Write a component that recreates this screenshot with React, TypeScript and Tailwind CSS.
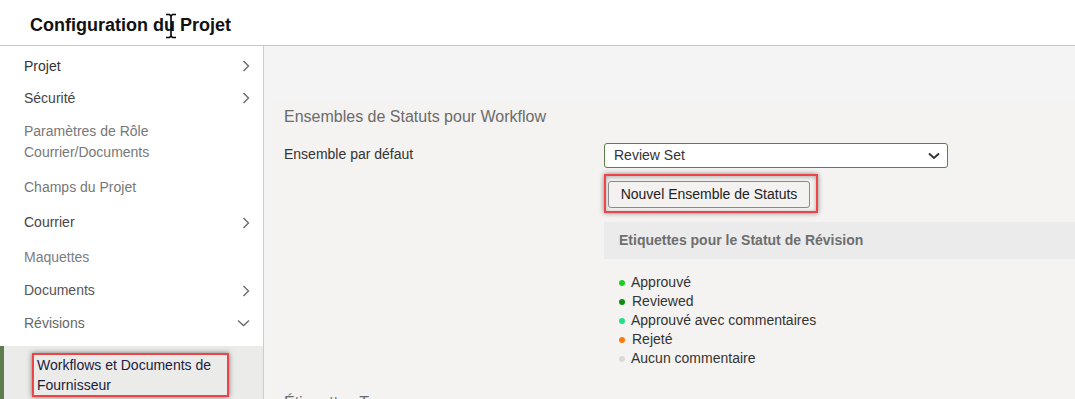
import React from 'react';

type NavItem = {
  label: string[];
  color: string;
  h: string;
  icon?: 'right' | 'down';
};

const NAV: NavItem[] = [
  { label: ['Projet'], color: 'text-[#333333]', h: 'h-[32px]', icon: 'right' },
  { label: ['Sécurité'], color: 'text-[#444444]', h: 'h-[32px]', icon: 'right' },
  { label: ['Paramètres de Rôle', 'Courrier/Documents'], color: 'text-[#777777]', h: 'h-[55px]' },
  { label: ['Champs du Projet'], color: 'text-[#777777]', h: 'h-[36px]' },
  { label: ['Courrier'], color: 'text-[#444444]', h: 'h-[35px]', icon: 'right' },
  { label: ['Maquettes'], color: 'text-[#7c7c84]', h: 'h-[34px]' },
  { label: ['Documents'], color: 'text-[#555555]', h: 'h-[33px]', icon: 'right' },
  { label: ['Révisions'], color: 'text-[#666666]', h: 'h-[32px]', icon: 'down' },
];

const LABELS = [
  { name: 'Approuvé', dot: 'bg-[#1ed01e]' },
  { name: 'Reviewed', dot: 'bg-[#128a12]', nudge: true },
  { name: 'Approuvé avec commentaires', dot: 'bg-[#22e08a]' },
  { name: 'Rejeté', dot: 'bg-[#ff7a0a]', nudge: true },
  { name: 'Aucun commentaire', dot: 'bg-[#dadada]' },
];

function ChevronRight() {
  return (
    <svg width="8" height="12" viewBox="0 0 8 12" fill="none" className="text-[#666]">
      <polyline points="1.5,1 6.5,6 1.5,11" stroke="currentColor" strokeWidth="1.3" />
    </svg>
  );
}

function ChevronDown() {
  return (
    <svg width="13" height="8" viewBox="0 0 13 8" fill="none" className="text-[#666]">
      <polyline points="1,1.5 6.5,6.5 12,1.5" stroke="currentColor" strokeWidth="1.3" />
    </svg>
  );
}

export default function App() {
  return (
    <div className="relative h-[399px] w-[1075px] overflow-hidden bg-white font-['Liberation_Sans',Arial,sans-serif]">
      {/* Header */}
      <header className="flex h-[46px] items-center border-b border-[#c8c8c8] pl-[30px] pt-[5px]">
        <h1 className="text-[18px] font-bold text-[#111]">Configuration du Projet</h1>
      </header>

      {/* text cursor in the shot */}
      <svg
        className="pointer-events-none absolute left-[165px] top-[13px]"
        width="12"
        height="26"
        viewBox="0 0 12 26"
        fill="none"
      >
        <path d="M1 1.5h3.5L6 3l1.5-1.5H11M6 3v20M1 24.5h3.5L6 23l1.5 1.5H11" stroke="#000" strokeWidth="1.6" />
      </svg>

      <div className="flex h-[353px]">
        {/* Sidebar */}
        <nav className="w-[264px] shrink-0 border-r border-[#cccccc] bg-white pt-[4px]">
          {NAV.map((item) => (
            <div
              key={item.label[0]}
              className={`flex items-center justify-between pl-6 pr-[13px] text-[14px] leading-[21px] ${item.h} ${item.color}`}
            >
              <div>
                {item.label.map((l) => (
                  <div key={l}>{l}</div>
                ))}
              </div>
              {item.icon === 'right' && <ChevronRight />}
              {item.icon === 'down' && <ChevronDown />}
            </div>
          ))}
          <div className="mt-[7px] h-[60px] border-l-4 border-[#5e7d4e] bg-[#ebebea] pl-[28px] pt-[7px]">
            <div className="h-[44px] w-[197px] border-2 border-[#ec4447] px-[3px] text-[14px] leading-[20px] text-[#1c1c40] shadow-[0_0_5px_rgba(0,0,0,0.5)]">
              Workflows et Documents de
              <br />
              Fournisseur
            </div>
          </div>
        </nav>

        {/* Main */}
        <main className="flex-1 bg-[#f4f4f4] pt-[55px] pl-[6px]">
          <div className="h-full bg-[#f4f3f1] pl-[14px]">
            <h2 className="pt-[6px] text-[16px] leading-[20px] text-[#6b6b6b]">
              Ensembles de Statuts pour Workflow
            </h2>

            <div className="mt-4 flex items-start">
              <div className="mt-[1px] w-[320px] shrink-0 text-[14px] leading-[20px] text-[#333]">
                Ensemble par défaut
              </div>
              <div className="flex-1">
                <div className="flex h-[25px] w-[344px] items-center justify-between rounded-[3px] border border-[#5b7f47] bg-white pl-[9px] pr-[7px] text-[14px] text-[#333]">
                  <span>Review Set</span>
                  <svg width="12" height="8" viewBox="0 0 12 8" fill="none">
                    <polyline points="1,1.5 6,6 11,1.5" stroke="#333" strokeWidth="2" />
                  </svg>
                </div>

                <div className="mt-[6px] inline-block border-2 border-[#ec4447] pb-[3px] pl-[2px] pr-[6px] pt-[5px] shadow-[0_0_5px_rgba(0,0,0,0.45),inset_0_1px_4px_rgba(0,0,0,0.3)]">
                  <button className="h-[27px] w-[202px] rounded-[3px] border border-[#8a8a8a] bg-[#f3f2f1] text-[14px] text-[#222]">
                    Nouvel Ensemble de Statuts
                  </button>
                </div>

                <div className="mt-[9px] flex h-[37px] items-center bg-[#ebebeb] pl-[15px] text-[14px] font-bold text-[#6e6e6e]">
                  Etiquettes pour le Statut de Révision
                </div>

                <ul className="mt-[14px] pl-[15px] text-[14px] leading-[19px] text-[#333]">
                  {LABELS.map((l) => (
                    <li key={l.name} className="flex items-center">
                      <span className={`h-[6px] w-[6px] rounded-full ${l.dot}`} />
                      <span className={l.nudge ? 'ml-[7px]' : 'ml-[6px]'}>{l.name}</span>
                    </li>
                  ))}
                </ul>
              </div>
            </div>

            <h2 className="mt-[25px] text-[16px] leading-[20px] text-[#6b6b6b]">Étiquettes Types</h2>
          </div>
        </main>
      </div>
    </div>
  );
}
